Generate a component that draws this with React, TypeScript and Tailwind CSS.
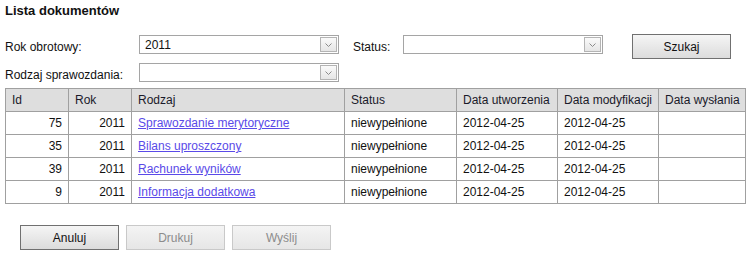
import React from "react";

interface IRow {
    id: number;
    rok: number;
    rodzaj: string;
    status: string;
    utworzenia: string;
    modyfikacji: string;
    wyslania: string;
}

const rows: IRow[] = [
    { id: 75, rok: 2011, rodzaj: "Sprawozdanie merytoryczne", status: "niewypełnione", utworzenia: "2012-04-25", modyfikacji: "2012-04-25", wyslania: "" },
    { id: 35, rok: 2011, rodzaj: "Bilans uproszczony", status: "niewypełnione", utworzenia: "2012-04-25", modyfikacji: "2012-04-25", wyslania: "" },
    { id: 39, rok: 2011, rodzaj: "Rachunek wyników", status: "niewypełnione", utworzenia: "2012-04-25", modyfikacji: "2012-04-25", wyslania: "" },
    { id: 9, rok: 2011, rodzaj: "Informacja dodatkowa", status: "niewypełnione", utworzenia: "2012-04-25", modyfikacji: "2012-04-25", wyslania: "" },
];

const Select: React.FC<{ value?: string }> = ({ value }) => (
    <div className="w-[200px] h-[19px] border border-[#a5a5a5] bg-white flex items-center justify-between pl-[5px] pr-[1px]">
        <span className="text-[12px] leading-none text-[#111]">{value}</span>
        <div className="w-[17px] h-[15px] border border-[#b4b4b4] bg-gradient-to-b from-[#fafafa] to-[#e6e6e6] flex items-center justify-center">
            <svg width="7" height="4" viewBox="0 0 7 4">
                <path d="M0.5 0.5 L3.5 3.5 L6.5 0.5" fill="none" stroke="#8a8a8a" strokeWidth="1" />
            </svg>
        </div>
    </div>
);

const Button: React.FC<{ label: string; disabled?: boolean; className?: string }> = ({ label, disabled, className }) => (
    <div
        className={
            "w-[99px] h-[25px] flex items-center justify-center text-[12px] " +
            (disabled
                ? "border border-[#c9c9c9] bg-gradient-to-b from-[#f4f4f4] to-[#e6e6e6] text-[#8c8c8c] "
                : "border border-[#707070] bg-gradient-to-b from-[#f5f5f5] to-[#dcdcdc] text-[#111] ") +
            (className ?? "")
        }
    >
        {label}
    </div>
);

const th = "h-[23px] border border-[#a0a0a0] bg-[#dedede] text-left font-normal pl-[6px] text-[#1a1a2a]";
const td = "h-[23px] border border-[#a0a0a0] pl-[6px]";

export default function App() {
    return (
        <div className="w-[750px] h-[253px] bg-white text-[#111] pl-[5px] pt-[3px]" style={{ fontFamily: '"Liberation Sans", Arial, sans-serif' }}>
            <div className="text-[13px] font-bold leading-[16px]">Lista dokumentów</div>

            <div className="flex items-start h-[19px] mt-[16px]">
                <div className="w-[134px] text-[12px] pt-[3px]">Rok obrotowy:</div>
                <Select value="2011" />
                <div className="w-[50px] ml-[14px] text-[12px] pt-[3px]">Status:</div>
                <Select />
                <Button label="Szukaj" className="ml-[29px] -mt-[1px]" />
            </div>

            <div className="flex items-start h-[19px] mt-[9px]">
                <div className="w-[134px] text-[12px] pt-[3px]">Rodzaj sprawozdania:</div>
                <Select />
            </div>

            <table className="mt-[6px] w-[740px] border-collapse text-[12px] table-fixed">
                <colgroup>
                    <col className="w-[63px]" />
                    <col className="w-[63px]" />
                    <col className="w-[213px]" />
                    <col className="w-[112px]" />
                    <col className="w-[101px]" />
                    <col className="w-[101px]" />
                    <col className="w-[87px]" />
                </colgroup>
                <thead>
                    <tr>
                        <th className={th}>Id</th>
                        <th className={th}>Rok</th>
                        <th className={th}>Rodzaj</th>
                        <th className={th}>Status</th>
                        <th className={th}>Data utworzenia</th>
                        <th className={th}>Data modyfikacji</th>
                        <th className={th}>Data wysłania</th>
                    </tr>
                </thead>
                <tbody>
                    {rows.map((r) => (
                        <tr key={r.id}>
                            <td className={td + " text-right pr-[6px]"}>{r.id}</td>
                            <td className={td + " text-right pr-[6px]"}>{r.rok}</td>
                            <td className={td}>
                                <a href="#" className="text-[#5a4ae8] underline">{r.rodzaj}</a>
                            </td>
                            <td className={td}>{r.status}</td>
                            <td className={td}>{r.utworzenia}</td>
                            <td className={td}>{r.modyfikacji}</td>
                            <td className={td}>{r.wyslania}</td>
                        </tr>
                    ))}
                </tbody>
            </table>

            <div className="flex gap-[7px] ml-[15px] mt-[21px]">
                <Button label="Anuluj" />
                <Button label="Drukuj" disabled />
                <Button label="Wyślij" disabled />
            </div>
        </div>
    );
}
